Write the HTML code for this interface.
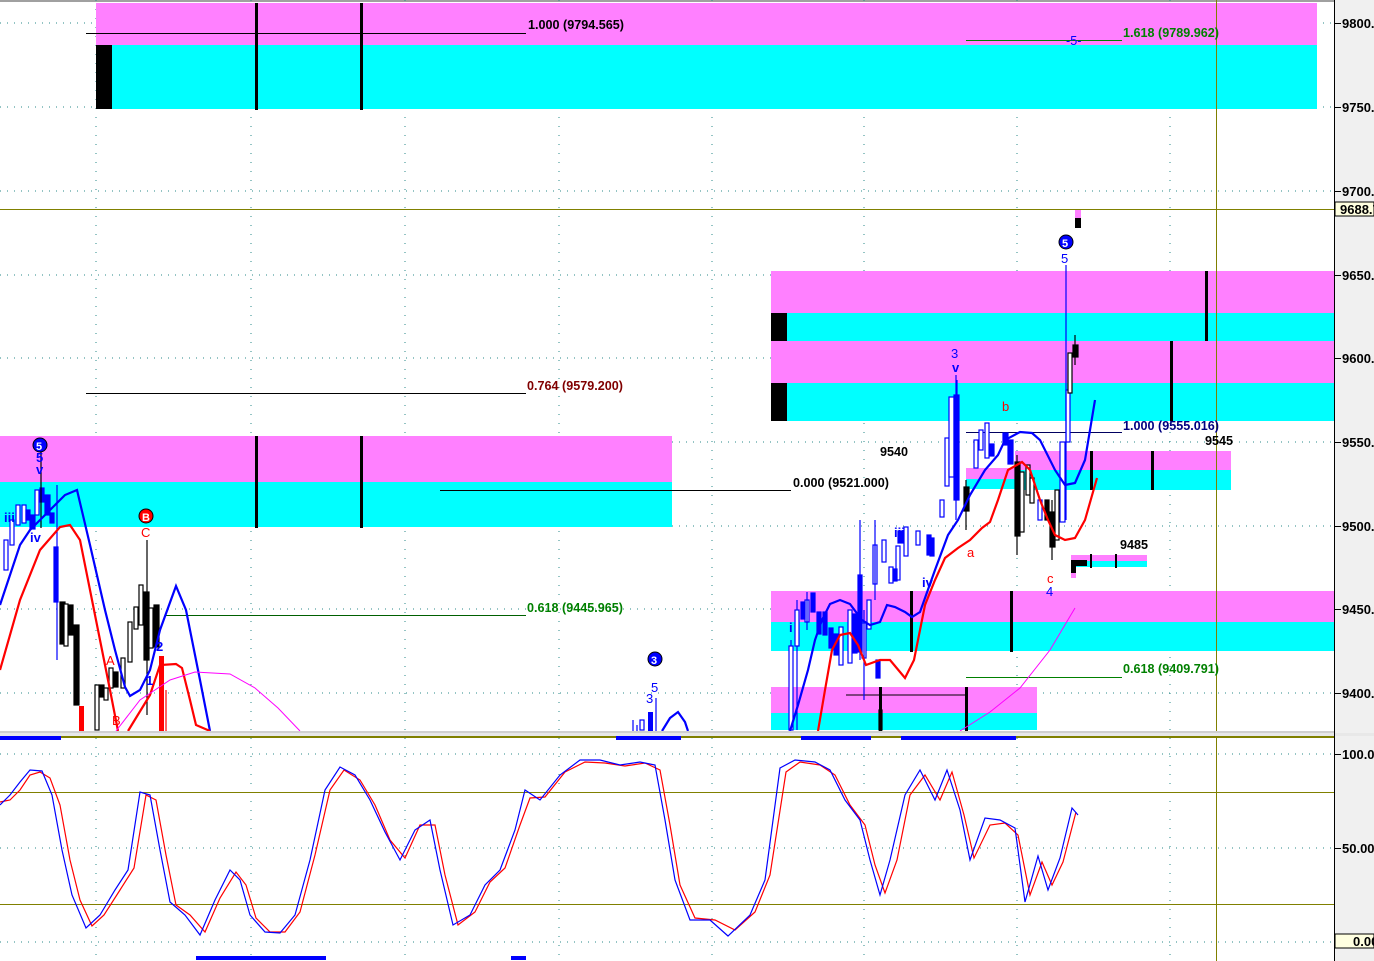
<!DOCTYPE html>
<html><head><meta charset="utf-8"><style>
html,body{margin:0;padding:0;background:#fff;width:1374px;height:961px;overflow:hidden}
svg{display:block}
text{font-family:"Liberation Sans",sans-serif;font-weight:bold;font-size:12.6px}
.ax{font-size:13px;fill:#000}
.wl text{font-size:13px}
</style></head><body>
<svg width="1374" height="961" viewBox="0 0 1374 961" xmlns="http://www.w3.org/2000/svg">
<rect x="0" y="0" width="1374" height="961" fill="#fff"/>
<rect x="1334" y="0" width="40" height="961" fill="#f0f0f0"/>
<rect x="0" y="0" width="1334" height="2" fill="#a0a0a0"/>
<g stroke="#2a8a8a" stroke-width="1" stroke-dasharray="1,6">
<line x1="0" y1="23" x2="1334" y2="23"/><line x1="0" y1="107" x2="1334" y2="107"/><line x1="0" y1="191" x2="1334" y2="191"/>
<line x1="0" y1="275" x2="1334" y2="275"/><line x1="0" y1="358" x2="1334" y2="358"/><line x1="0" y1="442" x2="1334" y2="442"/>
<line x1="0" y1="526" x2="1334" y2="526"/><line x1="0" y1="609" x2="1334" y2="609"/><line x1="0" y1="693" x2="1334" y2="693"/>
<line x1="0" y1="754" x2="1334" y2="754"/><line x1="0" y1="848" x2="1334" y2="848"/><line x1="0" y1="942" x2="1334" y2="942"/>
</g>
<g stroke="#2a8a8a" stroke-width="1" stroke-dasharray="1,8">
<line x1="96" y1="0" x2="96" y2="961"/><line x1="251" y1="0" x2="251" y2="961"/><line x1="405" y1="0" x2="405" y2="961"/>
<line x1="559" y1="0" x2="559" y2="961"/><line x1="712" y1="0" x2="712" y2="961"/><line x1="864" y1="0" x2="864" y2="961"/>
<line x1="1017" y1="0" x2="1017" y2="961"/><line x1="1170" y1="0" x2="1170" y2="961"/>
</g>
<rect x="96" y="3" width="1221" height="42" fill="#ff80ff"/>
<rect x="96" y="45" width="1221" height="64" fill="#00ffff"/>
<rect x="96" y="45" width="16" height="64" fill="#000"/>
<rect x="255" y="3" width="3" height="107" fill="#000"/>
<rect x="360" y="3" width="3" height="107" fill="#000"/>
<rect x="0" y="436" width="672" height="46" fill="#ff80ff"/>
<rect x="0" y="482" width="672" height="45" fill="#00ffff"/>
<rect x="255" y="436" width="3" height="92" fill="#000"/>
<rect x="360" y="436" width="3" height="92" fill="#000"/>
<rect x="771" y="271" width="563" height="42" fill="#ff80ff"/>
<rect x="771" y="313" width="563" height="28" fill="#00ffff"/>
<rect x="771" y="341" width="563" height="42" fill="#ff80ff"/>
<rect x="771" y="383" width="563" height="38" fill="#00ffff"/>
<rect x="771" y="313" width="16" height="28" fill="#000"/>
<rect x="771" y="383" width="16" height="38" fill="#000"/>
<rect x="1205" y="271" width="3" height="70" fill="#000"/>
<rect x="1170" y="341" width="3" height="80" fill="#000"/>
<rect x="1015" y="451" width="216" height="19" fill="#ff80ff"/>
<rect x="1015" y="470" width="216" height="20" fill="#00ffff"/>
<rect x="966" y="468" width="49" height="11" fill="#ff80ff"/>
<rect x="966" y="479" width="49" height="10" fill="#00ffff"/>
<rect x="1090" y="451" width="3" height="39" fill="#000"/>
<rect x="1151" y="451" width="3" height="39" fill="#000"/>
<rect x="1071" y="555" width="76" height="6" fill="#ff80ff"/>
<rect x="1071" y="561" width="76" height="6" fill="#00ffff"/>
<rect x="1071" y="560" width="16" height="6" fill="#000"/>
<rect x="1071" y="560" width="5" height="13" fill="#000"/>
<rect x="1071" y="573" width="5" height="5" fill="#ff80ff"/>
<rect x="1090" y="554" width="2" height="14" fill="#000"/>
<rect x="1115" y="554" width="2" height="14" fill="#000"/>
<rect x="771" y="591" width="563" height="31" fill="#ff80ff"/>
<rect x="771" y="622" width="563" height="29" fill="#00ffff"/>
<rect x="910" y="591" width="3" height="61" fill="#000"/>
<rect x="1010" y="591" width="3" height="61" fill="#000"/>
<rect x="771" y="687" width="266" height="26" fill="#ff80ff"/>
<rect x="771" y="713" width="266" height="17" fill="#00ffff"/>
<rect x="965" y="687" width="3" height="44" fill="#000"/>
<rect x="879" y="687" width="3" height="44" fill="#000"/>
<line x1="846" y1="695" x2="966" y2="695" stroke="#000"/>
<rect x="1075" y="209" width="6" height="9" fill="#ff80ff"/>
<rect x="1075" y="218" width="6" height="10" fill="#000"/>
<line x1="0" y1="209.5" x2="1334" y2="209.5" stroke="#808000"/>
<line x1="1216.5" y1="0" x2="1216.5" y2="961" stroke="#808000"/>
<line x1="0" y1="792.5" x2="1334" y2="792.5" stroke="#808000"/>
<line x1="0" y1="904.5" x2="1334" y2="904.5" stroke="#808000"/>
<g stroke-width="1">
<line x1="86" y1="33.5" x2="526" y2="33.5" stroke="#000"/>
<line x1="966" y1="40.5" x2="1122" y2="40.5" stroke="#008000"/>
<line x1="86" y1="393.5" x2="526" y2="393.5" stroke="#000"/>
<line x1="440" y1="490.5" x2="791" y2="490.5" stroke="#000"/>
<line x1="165" y1="615.5" x2="526" y2="615.5" stroke="#006000"/>
<line x1="966" y1="432.5" x2="1122" y2="432.5" stroke="#000060"/>
<line x1="966" y1="677.5" x2="1122" y2="677.5" stroke="#008000"/>
</g>
<text x="528" y="29" fill="#000">1.000 (9794.565)</text>
<text x="1066" y="45" fill="#0000ff" style="font-weight:normal">-5-</text>
<text x="1123" y="37" fill="#008000">1.618 (9789.962)</text>
<text x="527" y="390" fill="#800000">0.764 (9579.200)</text>
<text x="793" y="487" fill="#000">0.000 (9521.000)</text>
<text x="527" y="612" fill="#008000">0.618 (9445.965)</text>
<text x="1123" y="430" fill="#000080">1.000 (9555.016)</text>
<text x="1123" y="673" fill="#008000">0.618 (9409.791)</text>
<text x="880" y="456" fill="#000">9540</text>
<text x="1205" y="445" fill="#000">9545</text>
<text x="1120" y="549" fill="#000">9485</text>
<g stroke-width="1.2">
<g stroke="#0000ff" fill="#fff">
<line x1="791" y1="640" x2="791" y2="730"/><rect x="789" y="646" width="4" height="84"/>
<line x1="797" y1="600" x2="797" y2="730"/><rect x="795" y="610" width="4" height="36"/>
<rect x="805" y="600" width="4" height="22"/><line x1="807" y1="592" x2="807" y2="630"/>
<rect x="839" y="627" width="4" height="38"/>
<rect x="848" y="610" width="4" height="53"/>
<rect x="862" y="623" width="4" height="35"/><line x1="864" y1="610" x2="864" y2="700"/>
<rect x="867" y="600" width="4" height="29"/>
<rect x="873" y="545" width="4" height="39"/><line x1="875" y1="520" x2="875" y2="600"/>
<rect x="882" y="540" width="4" height="22"/>
<rect x="889" y="567" width="4" height="16"/><rect x="896" y="546" width="4" height="34"/><rect x="904" y="527" width="4" height="29"/>
<rect x="916" y="531" width="4" height="14"/><rect x="940" y="500" width="4" height="17"/>
<rect x="945" y="438" width="4" height="48"/><rect x="949" y="397" width="5" height="80"/>
<line x1="957" y1="380" x2="957" y2="420"/>
<rect x="974" y="440" width="4" height="28"/><rect x="979" y="430" width="4" height="20"/><rect x="985" y="423" width="4" height="35"/>
<rect x="1038" y="500" width="4" height="20"/>
<rect x="1060" y="442" width="5" height="80"/><rect x="1066" y="390" width="4" height="52"/><line x1="1066" y1="265" x2="1066" y2="520"/>
</g>
<g stroke="#0000ff" fill="#0000ff">
<rect x="801" y="602" width="4" height="17"/>
<rect x="811" y="593" width="4" height="19"/><rect x="817" y="612" width="4" height="22"/><rect x="823" y="612" width="4" height="23"/>
<rect x="829" y="628" width="4" height="20"/><rect x="834" y="634" width="4" height="21"/>
<rect x="858" y="575" width="4" height="77"/><line x1="860" y1="520" x2="860" y2="660"/>
<rect x="853" y="614" width="4" height="39"/><rect x="876" y="660" width="4" height="18"/>
<rect x="893" y="569" width="4" height="12"/><rect x="898" y="531" width="5" height="12"/><rect x="927" y="535" width="4" height="20"/><rect x="930" y="538" width="4" height="18"/>
<rect x="954" y="395" width="5" height="105"/><line x1="956" y1="375" x2="956" y2="520"/>
<rect x="990" y="444" width="4" height="12"/><rect x="1003" y="433" width="5" height="12"/><rect x="1008" y="440" width="5" height="24"/>
</g>
<g stroke="#000" fill="#000">
<rect x="964" y="487" width="5" height="24"/><line x1="966" y1="480" x2="966" y2="530"/>
<rect x="1015" y="462" width="5" height="74"/><line x1="1017" y1="455" x2="1017" y2="555"/>
<rect x="1045" y="500" width="4" height="20"/><rect x="1050" y="512" width="5" height="35"/><line x1="1052" y1="500" x2="1052" y2="560"/>
<rect x="1073" y="345" width="5" height="12"/><line x1="1075" y1="335" x2="1075" y2="365"/>
<rect x="879" y="710" width="3" height="20"/>
</g>
<g stroke="#000" fill="#fff">
<rect x="1020" y="472" width="4" height="60"/><rect x="1026" y="465" width="4" height="30"/><rect x="1030" y="478" width="4" height="25"/>
<rect x="1055" y="490" width="4" height="50"/><rect x="1068" y="353" width="4" height="40"/>
</g>
</g>
<g stroke-width="1.2">
<g stroke="#0000ff" fill="#fff">
<rect x="4" y="540" width="4" height="30"/><rect x="10" y="520" width="4" height="25"/><rect x="16" y="505" width="4" height="20"/><rect x="22" y="505" width="4" height="18"/><rect x="35" y="490" width="4" height="25"/>
<line x1="57" y1="485" x2="57" y2="660"/>
</g>
<g stroke="#0000ff" fill="#0000ff">
<rect x="26" y="510" width="4" height="10"/><rect x="30" y="515" width="5" height="14"/><rect x="40" y="488" width="4" height="14"/><rect x="45" y="495" width="5" height="20"/><rect x="50" y="513" width="4" height="10"/>
<rect x="54" y="547" width="4" height="55"/>
</g>
<g stroke="#000" fill="#000">
<line x1="41" y1="452" x2="41" y2="528"/>
<rect x="60" y="602" width="5" height="42"/><rect x="68" y="605" width="5" height="30"/><rect x="74" y="625" width="5" height="80"/>
<rect x="99" y="685" width="5" height="12"/><rect x="113" y="672" width="5" height="15"/><rect x="144" y="592" width="5" height="68"/><rect x="154" y="605" width="5" height="42"/>
<line x1="147" y1="540" x2="147" y2="715"/>
</g>
<g stroke="#000" fill="#fff">
<rect x="64" y="604" width="4" height="42"/><rect x="95" y="685" width="4" height="45"/><rect x="104" y="688" width="4" height="12"/><rect x="109" y="668" width="4" height="20"/><rect x="121" y="658" width="4" height="30"/><rect x="128" y="622" width="4" height="40"/><rect x="134" y="607" width="4" height="22"/><rect x="139" y="585" width="4" height="40"/><rect x="149" y="608" width="4" height="40"/>
</g>
<rect x="79" y="706" width="5" height="25" fill="#ff0000"/>
<rect x="159" y="656" width="5" height="75" fill="#ff0000"/>
<line x1="166" y1="690" x2="166" y2="731" stroke="#ff0000"/>
<g stroke="#0000ff" fill="#fff"><rect x="640" y="720" width="4" height="10"/><line x1="633" y1="720" x2="633" y2="731"/><line x1="637" y1="725" x2="637" y2="731"/><line x1="656" y1="698" x2="656" y2="731"/></g>
<rect x="648" y="712" width="5" height="19" fill="#0000ff"/>
</g>
<g fill="none" stroke-width="2.2">
<polyline stroke="#0000ff" points="0,605 20,545 30,530 40,520 55,505 65,495 77,490 90,545 105,610 115,650 125,687 130,696 140,690 150,670 160,630 176,586 186,610 200,680 210,731"/>
<polyline stroke="#ff0000" points="0,670 20,600 40,550 60,527 70,525 80,540 90,590 100,640 110,690 118,731"/>
<polyline stroke="#ff0000" points="128,731 150,695 160,665 176,664 182,668 190,700 196,725 210,731"/>
<polyline stroke="#0000ff" points="662,731 670,718 678,712 685,722 688,731"/>
<polyline stroke="#0000ff" points="790,731 798,705 808,670 815,640 822,620 830,604 840,600 850,604 862,620 870,625 880,622 887,605 895,607 905,612 912,617 920,612 935,570 948,535 958,520 970,495 985,470 998,455 1005,440 1020,432 1032,433 1040,440 1055,470 1065,485 1075,483 1085,460 1095,400"/>
<polyline stroke="#ff0000" points="818,731 825,690 832,650 840,635 850,633 858,645 866,665 880,660 890,660 905,678 914,660 925,605 935,580 945,558 958,548 970,540 982,528 990,522 998,500 1008,470 1022,462 1030,470 1040,500 1048,520 1055,535 1065,540 1075,538 1085,520 1097,478"/>
</g>
<g fill="none" stroke="#ff00ff" stroke-width="1">
<polyline points="116,731 140,700 170,680 195,672 230,674 255,688 278,708 300,731"/>
<polyline points="960,731 990,712 1020,688 1050,650 1075,608"/>
</g>
<g class="wl">
<circle cx="40" cy="445" r="7" fill="#0000ff" stroke="#000"/><text x="36" y="450" fill="#fff" style="font-size:11px">5</text>
<text x="36" y="462" fill="#0000ff">5</text><text x="36" y="474" fill="#0000ff">v</text>
<text x="4" y="522" fill="#0000ff">iii</text><text x="30" y="542" fill="#0000ff">iv</text>
<circle cx="146" cy="516" r="7" fill="#ff0000" stroke="#000"/><text x="142" y="521" fill="#fff" style="font-size:11px">B</text>
<text x="141" y="537" fill="#ff0000" style="font-weight:normal">C</text>
<text x="106" y="665" fill="#ff0000" style="font-weight:normal">A</text><text x="112" y="725" fill="#ff0000" style="font-weight:normal">B</text>
<text x="156" y="651" fill="#0000ff">2</text><text x="146" y="685" fill="#0000ff">1</text>
<circle cx="655" cy="659" r="7" fill="#0000ff" stroke="#000"/><text x="651" y="664" fill="#fff" style="font-size:11px">3</text>
<text x="651" y="692" fill="#0000ff" style="font-weight:normal">5</text><text x="646" y="703" fill="#0000ff" style="font-weight:normal">3</text>
<circle cx="1066" cy="242" r="7" fill="#0000ff" stroke="#000"/><text x="1062" y="247" fill="#fff" style="font-size:11px">5</text>
<text x="1061" y="263" fill="#0000ff" style="font-weight:normal">5</text>
<text x="951" y="358" fill="#0000ff" style="font-weight:normal">3</text><text x="952" y="372" fill="#0000ff">v</text>
<text x="1002" y="411" fill="#ff0000" style="font-weight:normal">b</text>
<text x="967" y="557" fill="#ff0000" style="font-weight:normal">a</text>
<text x="894" y="537" fill="#0000ff">iii</text><text x="922" y="587" fill="#0000ff">iv</text>
<text x="1047" y="583" fill="#ff0000" style="font-weight:normal">c</text><text x="1046" y="596" fill="#0000ff" style="font-weight:normal">4</text>
<text x="789" y="632" fill="#0000ff">i</text>
</g>
<rect x="0" y="731" width="1334" height="2" fill="#d0d0d0"/>
<rect x="0" y="733" width="1374" height="3" fill="#e8e8e8"/>
<rect x="0" y="736" width="1334" height="2" fill="#808000"/>
<g fill="#0000ff">
<rect x="0" y="736" width="61" height="4"/><rect x="616" y="736" width="65" height="4"/><rect x="801" y="736" width="70" height="4"/><rect x="901" y="736" width="115" height="4"/>
<rect x="196" y="956" width="130" height="4"/><rect x="511" y="956" width="15" height="4"/>
</g>
<g fill="none" stroke-width="1.2">
<polyline stroke="#ff0000" points="0,802 10,800 20,790 30,775 40,772 50,778 60,805 70,860 80,900 92,926 104,915 120,890 134,868 146,795 156,800 166,855 176,905 190,915 205,932 220,898 236,872 246,885 256,918 270,932 285,932 300,912 315,855 330,790 344,770 360,780 375,805 390,840 405,858 420,825 435,825 445,875 458,925 475,912 490,882 505,868 520,825 530,798 545,797 565,772 585,762 605,763 625,766 645,763 660,770 670,825 680,885 695,918 715,920 735,930 755,912 770,875 786,772 800,762 820,765 835,775 850,805 865,825 875,865 885,893 897,860 910,795 925,775 940,800 952,772 964,815 974,858 990,825 1005,823 1018,835 1030,895 1042,862 1052,885 1063,862 1076,812"/>
<polyline stroke="#0000ff" points="0,805 10,795 20,782 30,770 42,771 52,795 62,850 72,895 86,928 100,915 115,890 128,870 140,792 150,795 160,850 170,902 185,915 200,935 215,900 230,870 240,880 250,915 265,932 280,933 295,915 310,860 325,790 340,767 355,775 370,800 385,832 400,860 415,830 430,820 440,870 453,925 470,915 485,885 500,870 515,830 525,790 540,800 560,775 580,760 600,760 620,765 640,762 655,765 665,820 675,880 690,920 710,920 728,936 750,915 765,880 780,768 795,760 815,762 830,770 845,800 860,820 870,860 880,895 890,860 905,795 920,770 935,800 947,770 960,810 970,860 985,818 1000,820 1015,828 1025,902 1038,856 1048,890 1060,858 1072,808 1078,815"/>
</g>
<line x1="1334.5" y1="0" x2="1334.5" y2="961" stroke="#000"/>
<g stroke="#000">
<line x1="1335" y1="23.5" x2="1341" y2="23.5"/><line x1="1335" y1="107.5" x2="1341" y2="107.5"/><line x1="1335" y1="191.5" x2="1341" y2="191.5"/><line x1="1335" y1="275.5" x2="1341" y2="275.5"/><line x1="1335" y1="358.5" x2="1341" y2="358.5"/><line x1="1335" y1="442.5" x2="1341" y2="442.5"/><line x1="1335" y1="526.5" x2="1341" y2="526.5"/><line x1="1335" y1="609.5" x2="1341" y2="609.5"/><line x1="1335" y1="693.5" x2="1341" y2="693.5"/>
<line x1="1335" y1="754.5" x2="1341" y2="754.5"/><line x1="1335" y1="848.5" x2="1341" y2="848.5"/>
</g>
<text x="1342" y="28" class="ax">9800.</text><text x="1342" y="112" class="ax">9750.</text><text x="1342" y="196" class="ax">9700.</text><text x="1342" y="280" class="ax">9650.</text><text x="1342" y="363" class="ax">9600.</text><text x="1342" y="447" class="ax">9550.</text><text x="1342" y="531" class="ax">9500.</text><text x="1342" y="614" class="ax">9450.</text><text x="1342" y="698" class="ax">9400.</text>
<text x="1342" y="759" class="ax">100.0</text><text x="1342" y="853" class="ax">50.00</text>
<rect x="1335" y="202" width="39" height="14" fill="#ffffe0" stroke="#000"/>
<text x="1340" y="214" class="ax">9688.7</text>
<rect x="1335" y="934" width="39" height="14" fill="#ffffe0" stroke="#000"/>
<text x="1353" y="946" class="ax">0.00</text>
</svg>
</body></html>
